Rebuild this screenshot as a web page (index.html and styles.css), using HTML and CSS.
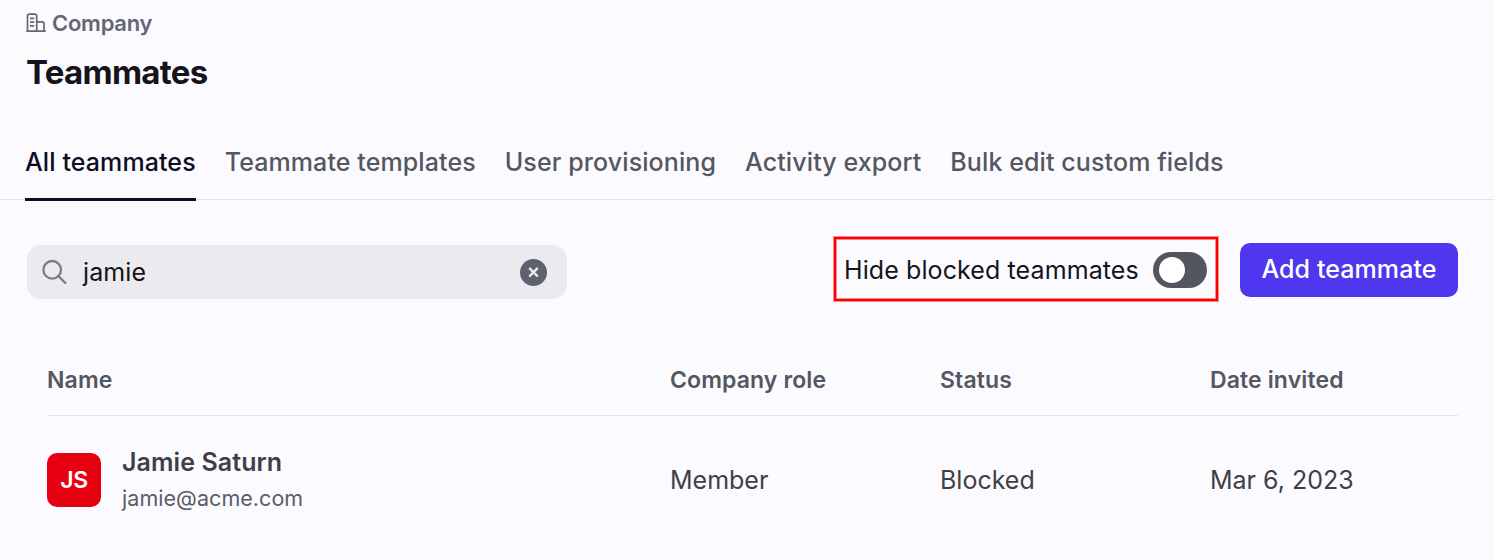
FILE: index.html
```html
<!DOCTYPE html>
<html lang="en">

<head>
    <meta charset="UTF-8">
    <meta name="viewport" content="width=device-width, initial-scale=1.0">
    <title>Teammates</title>
    <link rel="stylesheet" href="styles.css">
</head>

<body>

    <!-- Page Header -->
    <header class="page-header">
        <div class="breadcrumb">
            <svg class="company-icon" viewBox="0 0 20 20" fill="none" stroke="currentColor" stroke-width="1.7">
                <path d="M0.3 18.2H19.7M1.5 18V3.2Q1.5 1.2 3.5 1.2H8.7Q10.7 1.2 10.7 3.2V18M10.7 8.9H16.2Q18 8.9 18 10.7V18M4 5.4H8.2M4 9.1H8.2M4 12.8H8.2" />
            </svg>
            <span>Company</span>
        </div>
        <h1>Teammates</h1>
    </header>

    <!-- Tabs -->
    <nav class="tabs">
        <a class="tab active">All teammates</a>
        <a class="tab">Teammate templates</a>
        <a class="tab">User provisioning</a>
        <a class="tab">Activity export</a>
        <a class="tab">Bulk edit custom fields</a>
    </nav>

    <!-- Search and Actions -->
    <div class="toolbar">
        <div class="search">
            <svg class="search-icon" viewBox="0 0 26 26" fill="none" stroke="currentColor" stroke-width="2.3">
                <circle cx="10.2" cy="10.8" r="8.8" />
                <path d="M16.4 17L23.4 24" stroke-linecap="round" />
            </svg>
            <span class="search-text">jamie</span>
            <svg class="clear-icon" viewBox="0 0 27 27">
                <circle cx="13.5" cy="13.5" r="13.5" fill="#5f6170" />
                <path d="M9.9 9.6L17.1 16.8M17.1 9.6L9.9 16.8" stroke="#ebeaef" stroke-width="2.4" stroke-linecap="round" />
            </svg>
        </div>
        <div class="hide-blocked">
            <span>Hide blocked teammates</span>
            <span class="toggle"></span>
        </div>
        <button class="add-button">Add teammate</button>
    </div>

    <!-- Teammates Table -->
    <div class="table">
        <div class="row head">
            <div>Name</div>
            <div>Company role</div>
            <div>Status</div>
            <div>Date invited</div>
        </div>
        <div class="row">
            <div class="person">
                <div class="avatar">JS</div>
                <div>
                    <div class="name">Jamie Saturn</div>
                    <div class="email">jamie@acme.com</div>
                </div>
            </div>
            <div>Member</div>
            <div>Blocked</div>
            <div>Mar 6, 2023</div>
        </div>
    </div>

</body>

</html>
```
FILE: styles.css
```css
/* Basic Reset */
* {
    margin: 0;
    padding: 0;
    box-sizing: border-box;
}

body {
    height: 560px;
    overflow: hidden;
    background-color: #fbfaff;
    font-family: Inter, sans-serif;
    color: #14141a;
}

svg {
    display: block;
    flex-shrink: 0;
}

/* Page Header */
.page-header {
    height: 125px;
    padding: 9px 26px 0;
}

.breadcrumb {
    display: flex;
    align-items: center;
    gap: 6px;
    height: 28px;
    color: #646674;
    font-size: 22px;
    font-weight: 600;
    letter-spacing: -0.25px;
}

.company-icon {
    width: 20px;
    height: 20px;
}

h1 {
    margin-top: 13px;
    font-size: 33px;
    line-height: 44px;
    font-weight: 700;
    letter-spacing: -0.7px;
}

/* Tabs */
.tabs {
    display: flex;
    gap: 29px;
    height: 75px;
    padding-left: 25px;
    border-bottom: 1px solid #e2e1ec;
}

.tab {
    height: 76px;
    color: #54575f;
    font-size: 25px;
    line-height: 75px;
    font-weight: 500;
    letter-spacing: 0.1px;
    white-space: nowrap;
}

.tab.active {
    color: #0f0c23;
    border-bottom: 3px solid #0f0c23;
    border-radius: 2px 2px 0 0;
}

/* Search and Actions */
.toolbar {
    display: flex;
    align-items: center;
    height: 64px;
    margin: 38px 36px 0 27px;
}

.search {
    display: flex;
    align-items: center;
    width: 540px;
    height: 54px;
    margin-top: 4px;
    padding: 0 20px 0 15px;
    background-color: #ebeaef;
    border-radius: 14px;
}

.search-icon {
    width: 26px;
    height: 26px;
    color: #7b7c88;
}

.search-text {
    flex: 1;
    margin-left: 15px;
    font-size: 25px;
    letter-spacing: 0.1px;
}

.clear-icon {
    width: 27px;
    height: 27px;
}

.hide-blocked {
    display: flex;
    align-items: center;
    justify-content: space-between;
    width: 384px;
    height: 64px;
    margin: 0 1px 2px auto;
    padding: 2px 9px 0 8px;
    border: 2px solid #ff0000;
    box-shadow: 0 0 0 1px rgba(255, 0, 0, 0.45), inset 0 0 0 1px rgba(255, 0, 0, 0.45);
    font-size: 25px;
    letter-spacing: 0.1px;
    white-space: nowrap;
}

.toggle {
    width: 54px;
    height: 36px;
    padding: 5px 6px;
    background-color: #53565f;
    border-radius: 18px;
}

.toggle::before {
    content: "";
    display: block;
    width: 26px;
    height: 26px;
    background-color: #fff;
    border-radius: 50%;
}

.add-button {
    width: 218px;
    height: 54px;
    margin-left: 21px;
    padding-bottom: 2px;
    background-color: #4f37f0;
    border: none;
    border-radius: 10px;
    color: #fff;
    font-family: inherit;
    font-size: 25px;
    font-weight: 500;
    letter-spacing: 0.1px;
}

/* Teammates Table */
.table {
    margin: 43px 36px 0 47px;
}

.row {
    display: grid;
    grid-template-columns: 623px 270px 270px 1fr;
    align-items: center;
    height: 128px;
    color: #403f47;
    font-size: 25px;
}

.row.head {
    height: 71px;
    border-bottom: 1px solid #e4e3e8;
    color: #54575f;
    font-size: 23px;
    font-weight: 600;
    letter-spacing: 0.12px;
}

.person {
    display: flex;
    align-items: center;
    gap: 21px;
}

.avatar {
    width: 54px;
    height: 54px;
    background-color: #e60012;
    border-radius: 10px;
    color: #fff;
    font-size: 23px;
    line-height: 54px;
    font-weight: 600;
    letter-spacing: -0.3px;
    text-align: center;
}

.name {
    color: #403f47;
    font-size: 25px;
    line-height: 36px;
    font-weight: 600;
    letter-spacing: 0.08px;
}

.email {
    color: #5b5d66;
    font-size: 21.5px;
    line-height: 36px;
    letter-spacing: 0.05px;
}
```
